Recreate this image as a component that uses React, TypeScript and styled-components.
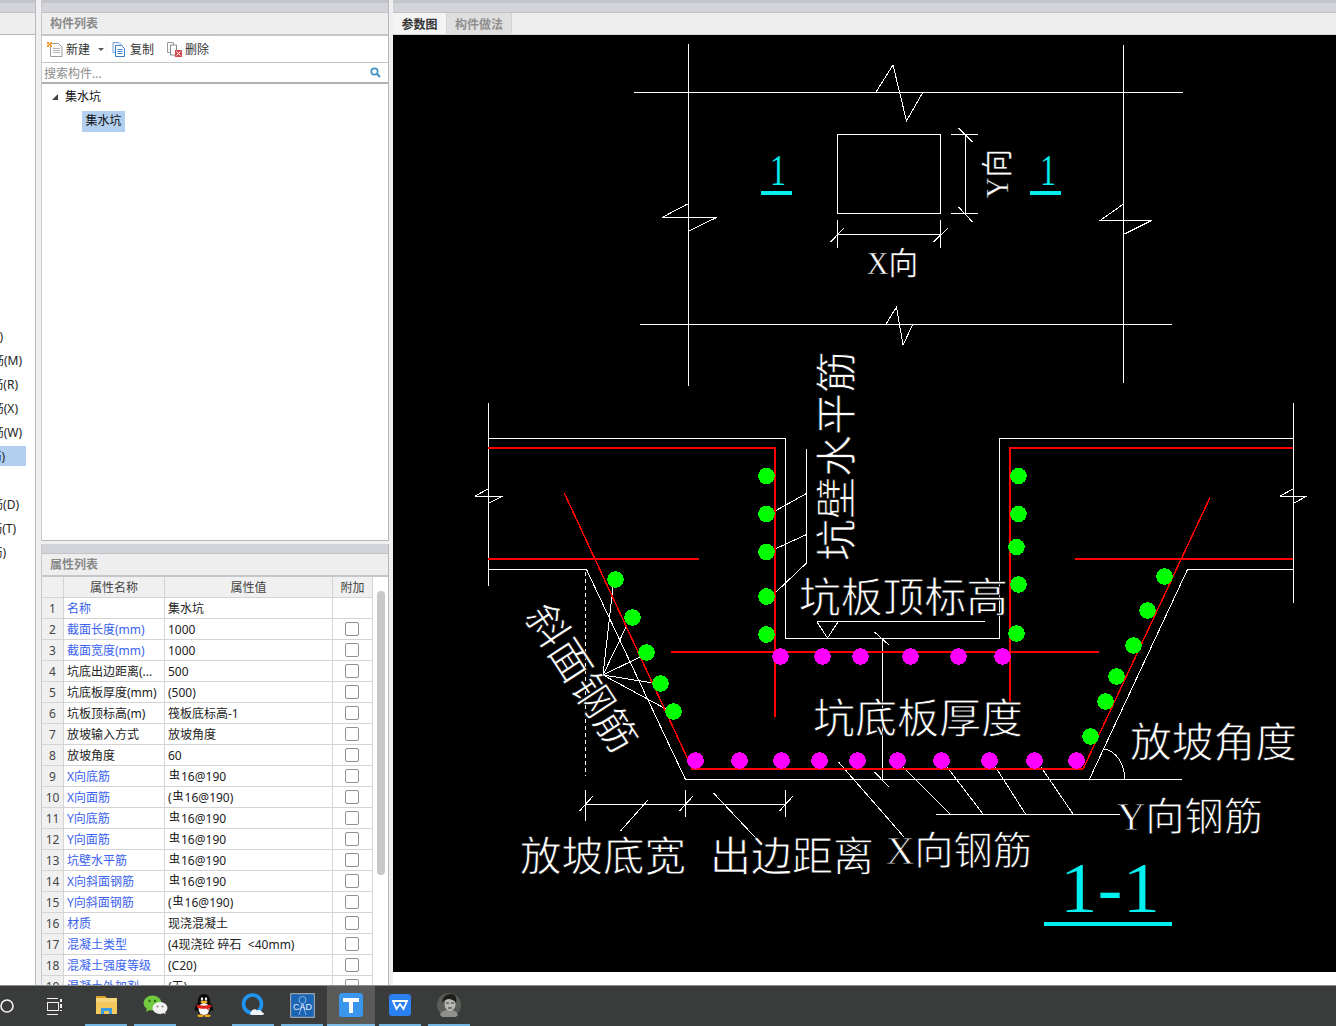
import React from "react";
import styled, { createGlobalStyle } from "styled-components";

const UI_FONT = `"Noto Sans", "Noto Sans CJK SC", sans-serif`;
const CAD_FONT = `"Liberation Serif", "Noto Sans CJK SC", serif`;

const Global = createGlobalStyle`
  html, body { margin: 0; padding: 0; background: #fff; overflow: hidden; }
  body { font-family: ${UI_FONT}; font-size: 12px; color: #111; }
  * { box-sizing: border-box; }
`;

const Page = styled.div`
  width: 1336px; height: 1026px; display: flex; flex-direction: column; overflow: hidden;
`;
const Workspace = styled.div`
  height: 985px; display: flex; background: #eef0f2; flex: none; overflow: hidden;
`;
const StripBar = styled.div`
  height: 13px; flex: none; background: #d2d4d9; border-top: 3px solid #c3c5ca; border-bottom: 1px solid #c0c2c6;
`;
const LeftPane = styled.div`
  width: 36px; flex: none; display: flex; flex-direction: column; background: #fff; border-right: 1px solid #b9b9b9; overflow: hidden;
`;
const LeftHead = styled.div`
  height: 22px; flex: none; background: #eeeeee; border-bottom: 1px solid #b4b4b4;
`;
const LeftList = styled.div`
  padding-top: 289px; display: flex; flex-direction: column;
`;
const LeftItem = styled.div<{ $end: number; $on?: boolean }>`
  height: 24px; width: 26px; display: flex; justify-content: flex-end; align-items: center; overflow: hidden; white-space: nowrap;
  padding-right: ${(p) => 26 - p.$end}px;
  color: #222; font-size: 12px;
  background: ${(p) => (p.$on ? "linear-gradient(#fff 2px, #b3cff0 2px, #b3cff0 22px, #fff 22px)" : "transparent")};
`;
const MiddleColumn = styled.div`
  width: 348px; margin-left: 5px; margin-right: 4px; flex: none; display: flex; flex-direction: column;
`;
const TreePanel = styled.section`
  height: 541px; flex: none; display: flex; flex-direction: column; background: #fff; border: 1px solid #b6b6b6; border-top: 0; border-left-color: #c9c9c9;
`;
const PropPanel = styled.section`
  margin-top: 3px; flex: 1; min-height: 0; display: flex; flex-direction: column; background: #fff; border-right: 1px solid #b6b6b6; border-left: 1px solid #c9c9c9; overflow: hidden;
`;
const PanelStrip = styled.div`
  height: 10px; flex: none; background: #d2d4d9; border-bottom: 1px solid #c0c2c6;
`;
const PanelTitle = styled.div`
  height: 23px; flex: none; display: flex; align-items: center; padding: 0 0 1px 8px; background: #eeeeee; border-bottom: 2px solid #c4c6ca; color: #8a8a8a; font-weight: 700; font-size: 12px;
`;
const Toolbar = styled.div`
  height: 27px; flex: none; display: flex; align-items: center; padding-left: 5px; border-bottom: 1px solid #c4c4c4;
`;
const ToolButton = styled.div<{ $w: number }>`
  width: ${(p) => p.$w}px; height: 23px; flex: none; display: flex; align-items: center; gap: 4px; padding-left: 5px; margin-right: 2px; border: 1px solid #f8f8f8; border-radius: 3px; color: #333; font-size: 12px; white-space: nowrap;
  &:first-child { border-color: transparent; padding-left: 0; margin-right: 0; gap: 2px; border-width: 0; }
  &:last-child { gap: 3px; }
`;
const Caret = styled.span`
  width: 0; height: 0; margin-left: 6px; border-left: 3px solid transparent; border-right: 3px solid transparent; border-top: 3px solid #555;
`;
const SearchBox = styled.div`
  height: 21px; flex: none; display: flex; align-items: center; justify-content: space-between; padding: 0 7px 0 2px; border-bottom: 2px solid #b0b0b0; color: #8c8c8c; font-size: 12px;
`;
const Tree = styled.div`
  flex: 1; display: flex; flex-direction: column; padding: 1px 0 0 10px;
`;
const TreeRow = styled.div`
  height: 22px; display: flex; align-items: center; gap: 7px; color: #111;
`;
const TreeArrow = styled.span`
  width: 0; height: 0; margin-top: 1px; border-left: 6px solid transparent; border-bottom: 6px solid #444;
`;
const TreeLeaf = styled.div`
  margin: 4px 0 0 30px; width: 43px; height: 21px; line-height: 20px; text-align: center; background: #b3cff0; color: #111;
`;
const Grid = styled.div`
  flex: 1; min-height: 0; display: flex; overflow: hidden;
`;
const GridTable = styled.div`
  width: 331px; flex: none; display: flex; flex-direction: column;
`;
const GridRow = styled.div<{ $head?: boolean }>`
  height: 21px; flex: none; display: grid; grid-template-columns: 22px 101px 168px 40px; border-bottom: 1px solid #d4d4d4;
  background: ${(p) => (p.$head ? "#f0f0f0" : "#fff")};
`;
const HeadCell = styled.div`
  display: flex; align-items: center; justify-content: center; border-right: 1px solid #d4d4d4; color: #444; font-size: 12px;
`;
const IndexCell = styled(HeadCell)`
  background: #f0f0f0; font-size: 12px; color: #444;
`;
const NameCell = styled.div<{ $link?: boolean }>`
  display: flex; align-items: center; padding-left: 3px; border-right: 1px solid #d4d4d4; white-space: nowrap; overflow: hidden; font-size: 12px;
  color: ${(p) => (p.$link ? "#3a62ee" : "#222")};
`;
const ValueCell = styled.div`
  display: flex; align-items: center; padding-left: 3px; border-right: 1px solid #d4d4d4; white-space: pre; font-size: 12px; color: #222;
`;
const RebarMark = styled.span`
  font-size: 11px; line-height: 11px; position: relative; top: -2px; margin: 0 1px 0 1px; color: #000;
`;
const CheckCell = styled.div`
  display: flex; align-items: center; justify-content: center; padding-right: 1px; border-right: 1px solid #d4d4d4;
`;
const CheckBox = styled.span`
  width: 14px; height: 14px; border: 1px solid #8f8f8f; border-radius: 2px; background: #fff;
`;
const ScrollTrack = styled.div`
  flex: 1; position: relative; background: #fff;
`;
const ScrollThumb = styled.div`
  position: absolute; left: 4px; top: 14px; width: 8px; height: 284px; border-radius: 4px; background: #c8c8c8;
`;
const RightPane = styled.div`
  flex: 1; min-width: 0; display: flex; flex-direction: column; background: #fff;
`;
const TabBar = styled.div`
  height: 22px; flex: none; display: flex; background: #eeeeee; border-bottom: 1px solid #d4d4d4;
`;
const Tab = styled.div<{ $on?: boolean; $w: number }>`
  width: ${(p) => p.$w}px; display: flex; align-items: center; justify-content: center; font-weight: 700; font-size: 12px;
  color: ${(p) => (p.$on ? "#333" : "#8f8f8f")};
  background: ${(p) => (p.$on ? "#f4f4f4" : "#dfdfdf")};
  border-right: 1px solid #d4d4d4;
`;
const CanvasSvg = styled.svg`
  display: block; width: 943px; height: 937px; background: #000; flex: none; shape-rendering: crispEdges;
`;
const CadText = styled.text<{ $color?: string; $size: number }>`
  font-family: ${CAD_FONT};
  font-size: ${(p) => p.$size}px;
  fill: ${(p) => p.$color ?? "#fff"};
  font-weight: 400;
  stroke: #000;
  stroke-width: ${(p) => (p.$color ? 0.2 : p.$size < 35 ? 0.35 : 0.8)}px;
  paint-order: fill stroke;
  shape-rendering: auto;
`;
const Taskbar = styled.div`
  height: 41px; flex: none; display: flex; gap: 1px; background: #3a3c3c; border-top: 1px solid #8a8c8e; overflow: hidden;
`;
const SystemGroup = styled.div`
  width: 81px; flex: none; display: flex; position: relative;
`;
const SysCell = styled.div`
  width: 48px; flex: none; display: flex; align-items: center; justify-content: center; margin-left: -17px; margin-right: 17px;
`;
const TaskCell = styled.div<{ $open?: boolean; $on?: boolean }>`
  width: 48px; height: 40px; flex: none; display: flex; align-items: center; justify-content: center;
  background: ${(p) => (p.$on ? "#5a5b59" : "transparent")};
  border-bottom: 2px solid ${(p) => (p.$open ? (p.$on ? "#7cbbe6" : "#72b5e0") : "transparent")};
  ${(p) => (!p.$on && p.$open ? "background-clip: padding-box; border-image: linear-gradient(to right, transparent 4px, #72b5e0 4px, #72b5e0 44px, transparent 44px) 1;" : "")}
`;

/* ---------- Icons ---------- */
const NewDocIcon = () => (
  <svg width="17" height="15" viewBox="0 0 17 15">
    <path d="M3.5 1.5h8l3.5 3.5v9.5h-11.5z" fill="#fdfdfd" stroke="#9c9c9c" />
    <path d="M6 6.5h7M6 8.5h7M6 10.5h7" stroke="#b5b5b5" />
    <path d="M0 0h2v2H0zM3 0h2v2H3zM0 3h2v2H0zM3 3h2v2H3zM1.5 1.5h2v2h-2z" fill="#f09a28" />
  </svg>
);
const CopyDocIcon = () => (
  <svg width="14" height="15" viewBox="0 0 14 15">
    <path d="M1 .5h6l3 3v7H1z" fill="#eaf2fb" stroke="#7aa5d8" />
    <path d="M3.5 3.5h6l3 3v8h-9z" fill="#fff" stroke="#3f7fca" />
    <path d="M5.5 7.5h5M5.5 9.5h5M5.5 11.5h5" stroke="#3f7fca" />
  </svg>
);
const DeleteDocIcon = () => (
  <svg width="15" height="15" viewBox="0 0 15 15">
    <path d="M.5.5h6v10H.5z" fill="#fff" stroke="#9a9a9a" />
    <path d="M3.5 3h6v10h-6z" fill="#fff" stroke="#8a8a8a" />
    <rect x="8" y="8" width="7" height="7" fill="#cf4a4a" />
    <path d="M9.5 9.5l4 4M13.5 9.5l-4 4" stroke="#fff" />
  </svg>
);
const SearchIcon = () => (
  <svg width="11" height="11" viewBox="0 0 11 11">
    <circle cx="4.5" cy="4.5" r="3.2" fill="none" stroke="#3f93c6" strokeWidth="1.7" />
    <path d="M7 7l3 3" stroke="#3f93c6" strokeWidth="2" />
  </svg>
);
const RingIcon = () => (
  <svg width="16" height="16" viewBox="0 0 16 16">
    <circle cx="8" cy="8" r="6" fill="none" stroke="#f2f2f2" strokeWidth="1.6" />
  </svg>
);
const TaskViewIcon = () => (
  <svg width="18" height="17" viewBox="0 0 18 17" fill="none" stroke="#f2f2f2">
    <path d="M1 .5h11M1 16.5h11" />
    <rect x="1.5" y="4.5" width="11" height="8" />
    <path d="M15 1v3M15 6v4" strokeWidth="2" />
    <path d="M15 12v1" strokeWidth="2" />
  </svg>
);
const FolderIcon = () => (
  <svg width="23" height="20" viewBox="0 0 23 20">
    <path d="M1 1h9l2 2H1z" fill="#d9a02c" />
    <path d="M1 3h21v15a1 1 0 0 1-1 1H2a1 1 0 0 1-1-1z" fill="#f7d67a" />
    <path d="M1 7h21v11a1 1 0 0 1-1 1H2a1 1 0 0 1-1-1z" fill="#f3c95e" />
    <path d="M6 13h11v6h-3v-3H9v3H6z" fill="#3b9be0" />
  </svg>
);
const WeChatIcon = () => (
  <svg width="25" height="20" viewBox="0 0 25 20">
    <ellipse cx="9.5" cy="8" rx="9" ry="7.5" fill="#72c83e" />
    <path d="M4 13l-1 4 5-2.5z" fill="#72c83e" />
    <circle cx="6.5" cy="6" r="1.2" fill="#2f6d18" />
    <circle cx="12" cy="6" r="1.2" fill="#2f6d18" />
    <ellipse cx="17" cy="13" rx="7.5" ry="6" fill="#f2f2f2" />
    <path d="M20 17.5l2.5 2-.5-3.5z" fill="#f2f2f2" />
    <circle cx="14.5" cy="11.5" r="1" fill="#888" />
    <circle cx="19.5" cy="11.5" r="1" fill="#888" />
  </svg>
);
const QQIcon = () => (
  <svg width="20" height="23" viewBox="0 0 20 23">
    <path d="M10 0c4 0 6 3 6 7 0 1 .5 2 1.500 3.500 1.500 2.500 2.500 6 1 6.500l-1.500-1c-.5 2-1.500 3-3 4H6c-1.500-1-2.500-2-3-4l-1.500 1c-1.500-.5-.5-4 1-6.500C3.500 9 4 8 4 7c0-4 2-7 6-7z" fill="#0b0b0b" />
    <ellipse cx="10" cy="15" rx="5.500" ry="6" fill="#f7f7f7" />
    <ellipse cx="8" cy="5" rx="1.200" ry="1.700" fill="#f2f2f2" />
    <ellipse cx="12" cy="5" rx="1.200" ry="1.700" fill="#f2f2f2" />
    <ellipse cx="10" cy="8" rx="3.500" ry="1.300" fill="#f0b020" />
    <path d="M3 10.500c4 1.500 10 1.500 14 0l.5 2.500-3 1 .5 3-2.500-2.500c-3 .5-6 .5-9.500-1z" fill="#e0201c" />
    <ellipse cx="6.500" cy="21.700" rx="3.200" ry="1.300" fill="#f0a818" />
    <ellipse cx="13.500" cy="21.700" rx="3.200" ry="1.300" fill="#f0a818" />
  </svg>
);
const QBrowserIcon = () => (
  <svg width="24" height="24" viewBox="0 0 24 24">
    <circle cx="11.500" cy="11" r="9" fill="none" stroke="#1f95f0" strokeWidth="3.600" />
    <path d="M11 22c-2 0-2.500-3-.5-3.500C11 16 14.500 15.500 16 17.500c2.500-1.500 5.500 .5 5 2 2.500 0 2.500 2.500 .5 2.500z" fill="#f0f4f8" />
  </svg>
);
const CadIcon = () => (
  <svg width="25" height="25" viewBox="0 0 25 25">
    <rect x=".5" y=".5" width="24" height="24" rx="1.500" fill="#1c64b4" stroke="#98a2ac" strokeWidth="1.400" />
    <circle cx="12.500" cy="7" r="3.500" fill="none" stroke="#86b4e2" />
    <path d="M12.500 10.500L9 22M12.500 10.500L16 22" stroke="#86b4e2" />
    <text x="12.500" y="17" textAnchor="middle" fontFamily="Liberation Sans" fontWeight="400" fontSize="9" fill="#e4eef8">CAD</text>
  </svg>
);
const TIcon = () => (
  <svg width="24" height="24" viewBox="0 0 24 24">
    <rect width="24" height="24" rx="3" fill="#3a95ec" />
    <path d="M4 5h16v4h-6v11h-4V9H4z" fill="#fff" />
  </svg>
);
const WpsIcon = () => (
  <svg width="22" height="22" viewBox="0 0 22 22">
    <rect width="22" height="22" rx="3" fill="#2a80f0" />
    <path d="M4 7h14l-3.500 8-3.500-5-3.500 5z" fill="none" stroke="#fff" strokeWidth="1.800" />
  </svg>
);
const AvatarIcon = () => (
  <svg width="24" height="24" viewBox="0 0 24 24">
    <circle cx="12" cy="12" r="12" fill="#5a5c58" />
    <path d="M3 22c1-4 5-5 9-5s8 1 9 5a12 12 0 0 1-18 0z" fill="#8e908c" />
    <ellipse cx="13" cy="11" rx="5.500" ry="7" fill="#b8b8b2" />
    <path d="M5 10c0-6 4-9 9-9s6 4 5 9c-2-3-5-4-7-4s-5 1-7 4z" fill="#1e1e1c" />
    <path d="M9 10h3M14 10h3M11 15h4" stroke="#2c2c2c" />
  </svg>
);

/* ---------- Data ---------- */
const leftItems: { t: string; end: number; on?: boolean }[] = [
  { t: "筋)", end: 3 }, { t: "筋(M)", end: 22 }, { t: "筋(R)", end: 18 }, { t: "筋(X)", end: 18 },
  { t: "筋(W)", end: 22 }, { t: "筋)", end: 5, on: true }, { t: "", end: 0 }, { t: "筋(D)", end: 19 },
  { t: "筋(T)", end: 16 }, { t: "筋)", end: 6 },
];

type Prop = { name: string; value: string; link?: boolean; rebar?: "plain" | "paren"; noCheck?: boolean };
const props: Prop[] = [
  { name: "名称", value: "集水坑", link: true, noCheck: true },
  { name: "截面长度(mm)", value: "1000", link: true },
  { name: "截面宽度(mm)", value: "1000", link: true },
  { name: "坑底出边距离(...", value: "500" },
  { name: "坑底板厚度(mm)", value: "(500)" },
  { name: "坑板顶标高(m)", value: "筏板底标高-1" },
  { name: "放坡输入方式", value: "放坡角度" },
  { name: "放坡角度", value: "60" },
  { name: "X向底筋", value: "16@190", link: true, rebar: "plain" },
  { name: "X向面筋", value: "16@190", link: true, rebar: "paren" },
  { name: "Y向底筋", value: "16@190", link: true, rebar: "plain" },
  { name: "Y向面筋", value: "16@190", link: true, rebar: "plain" },
  { name: "坑壁水平筋", value: "16@190", link: true, rebar: "plain" },
  { name: "X向斜面钢筋", value: "16@190", link: true, rebar: "plain" },
  { name: "Y向斜面钢筋", value: "16@190", link: true, rebar: "paren" },
  { name: "材质", value: "现浇混凝土", link: true },
  { name: "混凝土类型", value: "(4现浇砼 碎石  <40mm)", link: true },
  { name: "混凝土强度等级", value: "(C20)", link: true },
  { name: "混凝土外加剂", value: "(无)", link: true },
];

const whitePaths = [
  // plan
  "M688.5 44V386", "M1123.5 45V383", "M634 92.500H1183", "M640 324.500H1172",
  "M876 92L893 65L906.500 121L923 92", "M886 324L896.500 307L903 345L913 324",
  "M687.500 204L662 217.500H716.500L689 231", "M1123.500 204L1100 220.500H1151.500L1124.500 234",
  "M837.500 134.500H940.500V213.500H837.500Z",
  "M951 134.500H978", "M951 213.500H978", "M965.500 134V213",
  "M958.500 128L972.500 142", "M958.500 207L972.500 222",
  "M837.500 220V248", "M940.500 220V248", "M838 234.500H940",
  "M830.500 242L844 228", "M933.500 242L948 228",
  // section frame
  "M488.500 403V586", "M1293.500 403V603",
  "M488 438.500H785.500V638.500H999.500V438.500H1293",
  "M488 569.500H586.500L685.500 779.500H1181.500",
  "M1089.500 779L1187.500 569.500H1293",
  "M1104 749C1116 751 1125 764 1124.500 779",
  // left and right breaks
  "M488 489L475 496H503L489 503", "M1293 489L1280 496H1307L1294 503",
  // wall leaders
  "M806.500 449V563L775 593", "M806.500 493.500L775 511", "M806.500 534.500L775 549",
  // elevation mark
  "M817 622L827.500 638L838 622", "M817 621.500H985",
  // thickness dim
  "M882.500 638V779", "M874.500 632L889 645", "M874.500 772L889 787",
  // slope leaders
  "M603 675L613 587", "M603 675L627 625", "M603 675L640 657", "M603 675L653 683", "M603 675L666 709",
  // Y rebar
  "M936 814.500H1120", "M903 767L950 814", "M947 767L983 814", "M995.500 767L1025.500 814", "M1041 767L1073 814",
  // X rebar leader
  "M838.500 762L904 837",
  // bottom dims
  "M585 790V821", "M685.500 790V817", "M785.500 790V817", "M585 804.500H786",
  "M579.500 811L593 796", "M679.500 811L693 796", "M779.500 811L793 796",
  "M648 800L620.500 831", "M713.500 793L760.500 843",
];
const redThick = [
  "M488 448H775V717", "M1293 448H1010V704", "M488 559H699", "M1075 559H1293", "M671 652H1099", "M691 769H1083",
];
const redThin = ["M564.500 493.500L687.500 758.500L692 769", "M1083 769L1210 497.500"];
const greenDots: [number, number][] = [
  [766.5, 476], [766.5, 514], [766.5, 552], [766.5, 596.500], [766.5, 634.500],
  [1018.5, 476], [1018.5, 514], [1016.5, 547], [1018.5, 584.500], [1016.5, 633.500],
  [615.5, 579.500], [632.5, 617.500], [646.5, 652.500], [660.5, 683.500], [673.5, 711.500],
  [1164.5, 576.500], [1147.5, 610.500], [1133.5, 645.500], [1116.5, 676.500], [1105.5, 701.500], [1090.5, 736.500],
];
const magentaDots: [number, number][] = [
  [780.5, 656.500], [822.5, 656.500], [860.5, 656.500], [910.5, 656.500], [958.5, 656.500], [1002.5, 656.500],
  [695.5, 760.500], [739.5, 760.500], [781.5, 760.500], [819.5, 760.500], [857.5, 760.500], [897.5, 760.500], [941.5, 760.500], [989.5, 760.500], [1034.5, 760.500], [1076.5, 760.500],
];
const labels: { t: string; x: number; y: number; w: number; s: number; r?: [number, number, number]; c?: string }[] = [
  { t: "X向", x: 867, y: 274, w: 51, s: 31 },
  { t: "Y向", x: 1008, y: 198, w: 49, s: 31, r: [-90, 1008, 198] },
  { t: "坑壁水平筋", x: 851, y: 561, w: 210, s: 41, r: [-90, 851, 561] },
  { t: "坑板顶标高", x: 799, y: 612, w: 209, s: 41 },
  { t: "坑底板厚度", x: 813, y: 733, w: 210, s: 41 },
  { t: "放坡角度", x: 1130, y: 757, w: 167, s: 41 },
  { t: "斜面钢筋", x: 524, y: 616, w: 167, s: 41, r: [57, 524, 616] },
  { t: "放坡底宽", x: 520, y: 871, w: 166, s: 41 },
  { t: "出边距离", x: 710, y: 871, w: 164, s: 41 },
  { t: "X向钢筋", x: 886, y: 864, w: 146, s: 39 },
  { t: "Y向钢筋", x: 1117, y: 830, w: 146, s: 39 },
  { t: "1", x: 770, y: 185, w: 16, s: 44, c: "#00f0f0" },
  { t: "1", x: 1040, y: 185, w: 16, s: 44, c: "#00f0f0" },
  { t: "1-1", x: 1060, y: 912, w: 100, s: 72, c: "#00f0f0" },
];

const Drawing = () => (
  <CanvasSvg viewBox="393 35 943 937">
    <g fill="none" stroke="#fff" strokeWidth="1">
      {whitePaths.map((d) => <path key={d} d={d} />)}
      <path d="M585.500 572V776" strokeDasharray="4 3" />
    </g>
    <g fill="none" stroke="#ff0000">
      {redThick.map((d) => <path key={d} d={d} strokeWidth="2" />)}
      {redThin.map((d) => <path key={d} d={d} strokeWidth="1.500" />)}
    </g>
    {greenDots.map(([x, y]) => <circle key={`${x}-${y}`} cx={x} cy={y} r="8.300" fill="#00ff00" />)}
    {magentaDots.map(([x, y]) => <circle key={`${x}-${y}`} cx={x} cy={y} r="8.300" fill="#ff00ff" />)}
    <g fill="#00eeee">
      <rect x="761" y="191" width="31" height="4" />
      <rect x="1030" y="191" width="31" height="4" />
      <rect x="1044" y="922" width="128" height="4" />
    </g>
    {labels.map((l) => (
      <CadText
        key={l.t + l.x}
        x={l.x}
        y={l.y}
        $size={l.s}
        $color={l.c}
        textLength={l.w}
        lengthAdjust="spacingAndGlyphs"
        transform={l.r ? `rotate(${l.r[0]} ${l.r[1]} ${l.r[2]})` : undefined}
      >
        {l.t}
      </CadText>
    ))}
  </CanvasSvg>
);

const PropValue = ({ p }: { p: Prop }) => {
  if (!p.rebar) return <>{p.value}</>;
  return (
    <>
      {p.rebar === "paren" ? "(" : ""}
      <RebarMark>虫</RebarMark>
      {p.value}
      {p.rebar === "paren" ? ")" : ""}
    </>
  );
};

export default function App() {
  return (
    <Page>
      <Global />
      <Workspace>
        <LeftPane>
          <StripBar />
          <LeftHead />
          <LeftList>
            {leftItems.map((it, i) => (
              <LeftItem key={i} $end={it.end} $on={it.on}>{it.t}</LeftItem>
            ))}
          </LeftList>
        </LeftPane>
        <MiddleColumn>
          <TreePanel>
            <StripBar />
            <PanelTitle>构件列表</PanelTitle>
            <Toolbar>
              <ToolButton $w={59}><NewDocIcon />新建<Caret /></ToolButton>
              <ToolButton $w={53}><CopyDocIcon />复制</ToolButton>
              <ToolButton $w={53}><DeleteDocIcon />删除</ToolButton>
            </Toolbar>
            <SearchBox>搜索构件...<SearchIcon /></SearchBox>
            <Tree>
              <TreeRow><TreeArrow />集水坑</TreeRow>
              <TreeLeaf>集水坑</TreeLeaf>
            </Tree>
          </TreePanel>
          <PropPanel>
            <PanelStrip />
            <PanelTitle>属性列表</PanelTitle>
            <Grid>
              <GridTable>
                <GridRow $head>
                  <HeadCell />
                  <HeadCell>属性名称</HeadCell>
                  <HeadCell>属性值</HeadCell>
                  <HeadCell>附加</HeadCell>
                </GridRow>
                {props.map((p, i) => (
                  <GridRow key={p.name}>
                    <IndexCell>{i + 1}</IndexCell>
                    <NameCell $link={p.link}>{p.name}</NameCell>
                    <ValueCell><PropValue p={p} /></ValueCell>
                    <CheckCell>{!p.noCheck && <CheckBox />}</CheckCell>
                  </GridRow>
                ))}
              </GridTable>
              <ScrollTrack><ScrollThumb /></ScrollTrack>
            </Grid>
          </PropPanel>
        </MiddleColumn>
        <RightPane>
          <StripBar />
          <TabBar>
            <Tab $on $w={54}>参数图</Tab>
            <Tab $w={65}>构件做法</Tab>
          </TabBar>
          <Drawing />
        </RightPane>
      </Workspace>
      <Taskbar>
        <SystemGroup>
          <SysCell><RingIcon /></SysCell>
          <SysCell><TaskViewIcon /></SysCell>
        </SystemGroup>
        <TaskCell $open><FolderIcon /></TaskCell>
        <TaskCell $open><WeChatIcon /></TaskCell>
        <TaskCell><QQIcon /></TaskCell>
        <TaskCell $open><QBrowserIcon /></TaskCell>
        <TaskCell $open><CadIcon /></TaskCell>
        <TaskCell $open $on><TIcon /></TaskCell>
        <TaskCell $open><WpsIcon /></TaskCell>
        <TaskCell $open><AvatarIcon /></TaskCell>
      </Taskbar>
    </Page>
  );
}
